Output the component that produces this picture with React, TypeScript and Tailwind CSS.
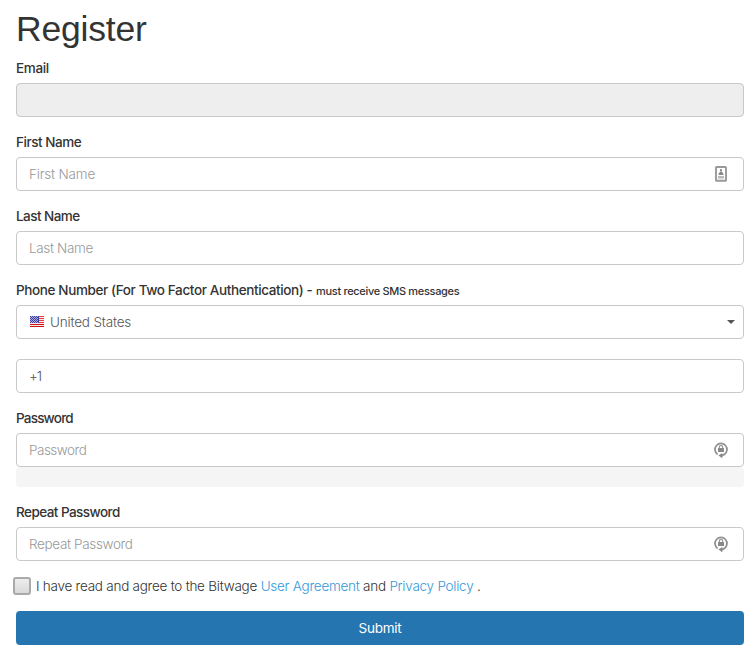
import { useState } from "react";

const inputClass =
  "block h-[34px] w-full rounded border border-[#c8c8c8] bg-white px-3 text-[13.5px] font-light text-[#555] outline-none placeholder:text-[#999]";

const labelClass =
  "mb-[5px] block h-5 text-[13.5px] leading-5 font-medium text-[#333]";

const ContactIcon = () => (
  <svg
    className="pointer-events-none absolute top-[9px] right-[17px]"
    width="12"
    height="16"
    viewBox="0 0 12 16"
  >
    <rect x="1" y="1" width="10" height="13.8" rx="0.6" fill="#fff" stroke="#999" strokeWidth="1.9" />
    <rect x="5" y="3.2" width="2" height="2.2" fill="#888" />
    <path d="M3.5 8.9c0-1.9.9-3.2 2.5-3.2s2.5 1.3 2.5 3.2z" fill="#888" />
    <rect x="3" y="10" width="6" height="2.6" fill="#bbb" />
  </svg>
);

const LockIcon = () => (
  <svg
    className="pointer-events-none absolute top-[8px] right-[15px]"
    width="16"
    height="18"
    viewBox="0 0 16 18"
  >
    <path
      d="M4.6 13.4A6 6 0 1 1 11.4 13.4L8.5 14.9"
      fill="none"
      stroke="#939393"
      strokeWidth="1.8"
    />
    <path d="M9.3 11.9v5.3L5.4 14.6z" fill="#888" />
    <path d="M6.4 7.5V6a1.6 1.6 0 0 1 3.2 0v1.5" fill="none" stroke="#999" strokeWidth="1.2" />
    <rect x="5" y="7" width="6" height="4" rx="0.5" fill="#888" />
  </svg>
);

const UsFlag = () => (
  <svg className="mb-px shrink-0" width="14" height="11" viewBox="0 0 14 11">
    <rect width="14" height="11" fill="#fbeaea" />
    {[0, 2, 4, 6].map((y) => (
      <rect key={y} y={y} width="14" height="1" fill="#e83c3c" />
    ))}
    <rect y="8" width="14" height="1" fill="#c81414" />
    <rect y="10" width="14" height="1" fill="#c81414" />
    <rect width="9" height="7" fill="#4040a0" />
    {[0, 1, 2, 3, 4, 5, 6].map((y) =>
      [0, 2, 4, 6].map((x) => (
        <rect
          key={`${x}-${y}`}
          x={x + 1 - (y % 2)}
          y={y}
          width="1"
          height="1"
          fill="#a9a9dd"
        />
      ))
    )}
  </svg>
);

const App = () => {
  const [firstName, setFirstName] = useState("");
  const [lastName, setLastName] = useState("");
  const [phone, setPhone] = useState("+1");
  const [password, setPassword] = useState("");
  const [repeat, setRepeat] = useState("");
  const [agreed, setAgreed] = useState(false);

  return (
    <div className="min-h-screen bg-white pt-[9px] pr-[11px] pl-4 font-['Inter','Open_Sans',sans-serif]">
      <h1 className="mb-[9px] h-10 font-['Liberation_Sans',Arial,sans-serif] text-[35.5px] leading-10 tracking-[-0.2px] text-[#333]">
        Register
      </h1>

      <form onSubmit={(e) => e.preventDefault()}>
        <div className="mb-[15px]">
          <label htmlFor="email" className={labelClass}>
            <span className="tracking-[-0.35px]">Email</span>
          </label>
          <input
            id="email"
            type="email"
            disabled
            className="block h-[34px] w-full rounded border border-[#c8c8c8] bg-[#eee] px-3"
          />
        </div>

        <div className="mb-[15px]">
          <label htmlFor="first" className={labelClass}>
            <span className="tracking-[-0.45px]">First Name</span>
          </label>
          <div className="relative">
            <input
              id="first"
              placeholder="First Name"
              value={firstName}
              onChange={(e) => setFirstName(e.target.value)}
              className={`${inputClass} tracking-[-0.2px]`}
            />
            <ContactIcon />
          </div>
        </div>

        <div className="mb-[15px]">
          <label htmlFor="last" className={labelClass}>
            <span className="tracking-[-0.55px]">Last Name</span>
          </label>
          <input
            id="last"
            placeholder="Last Name"
            value={lastName}
            onChange={(e) => setLastName(e.target.value)}
            className={`${inputClass} tracking-[-0.35px]`}
          />
        </div>

        {/* Phone */}
        <div className="mb-[15px]">
          <label htmlFor="phone" className={labelClass}>
            <span className="tracking-[-0.38px]">
              Phone Number (For Two Factor Authentication) -
            </span>{" "}
            <span className="text-[11px] tracking-[-0.32px]">
              must receive SMS messages
            </span>
          </label>
          <button
            type="button"
            className="mb-5 flex h-[34px] w-full items-center rounded border border-[#c8c8c8] bg-white pr-2 pl-[13px] text-[13.5px] font-light text-[#555]"
          >
            <UsFlag />
            <span className="ml-1.5 tracking-[-0.18px]">United States</span>
            <span className="ml-auto border-x-4 border-t-4 border-x-transparent border-t-[#555]" />
          </button>
          <input
            id="phone"
            value={phone}
            onChange={(e) => setPhone(e.target.value)}
            className={`${inputClass} tracking-[-1px]`}
          />
        </div>

        {/* Password */}
        <div className="mb-[15px]">
          <label htmlFor="password" className={labelClass}>
            <span className="tracking-[-0.8px]">Password</span>
          </label>
          <div className="relative">
            <input
              id="password"
              type="password"
              placeholder="Password"
              value={password}
              onChange={(e) => setPassword(e.target.value)}
              className={`${inputClass} tracking-[-0.5px]`}
            />
            <LockIcon />
          </div>
          <div className="h-5 rounded bg-[#f5f5f5]" />
        </div>

        <div className="mb-[15px]">
          <label htmlFor="repeat" className={labelClass}>
            <span className="tracking-[-0.55px]">Repeat Password</span>
          </label>
          <div className="relative">
            <input
              id="repeat"
              type="password"
              placeholder="Repeat Password"
              value={repeat}
              onChange={(e) => setRepeat(e.target.value)}
              className={`${inputClass} tracking-[-0.35px]`}
            />
            <LockIcon />
          </div>
        </div>

        <div className="mb-[15px] -ml-[3px] flex h-5 items-center">
          <input
            type="checkbox"
            checked={agreed}
            onChange={(e) => setAgreed(e.target.checked)}
            className="size-[18px] shrink-0 appearance-none rounded-[3px] border-2 border-[#aaa] bg-linear-to-b from-[#eee] to-[#d9d9d9] checked:bg-[#2576b0]"
          />
          <p className="ml-[5px] text-[13.5px] leading-5 font-light tracking-[-0.25px] whitespace-nowrap text-[#333]">
            I have read and agree to the Bitwage{" "}
            <a href="#" className="text-[#3498db]">
              User Agreement
            </a>{" "}
            and{" "}
            <a href="#" className="text-[#3498db]">
              Privacy Policy
            </a>{" "}
            .
          </p>
        </div>

        <button
          type="submit"
          className="block h-[34px] w-full rounded bg-[#2576b0] text-[13.5px] tracking-[-0.25px] text-white"
        >
          Submit
        </button>
      </form>
    </div>
  );
};

export default App;
